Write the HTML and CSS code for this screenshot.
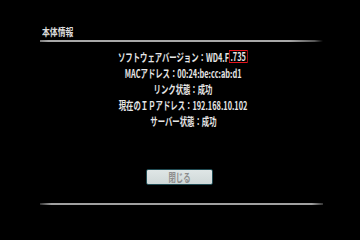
FILE: index.html
```html
<!DOCTYPE html>
<html lang="ja">
<head>
<meta charset="utf-8">
<link rel="stylesheet" href="styles.css">
</head>
<body>
<div class="screen">
  <div class="title"><span class="sq">本体情報</span></div>
  <div class="rule"></div>
  <div class="info">
    <div class="row"><span class="sq">ソフトウェアバージョン：WD4.F<span class="hl">.735</span></span></div>
    <div class="row"><span class="sq">MACアドレス：00:24:be:cc:ab:d1</span></div>
    <div class="row"><span class="sq">リンク状態：成功</span></div>
    <div class="row"><span class="sq">現在のＩＰアドレス：192.168.10.102</span></div>
    <div class="row"><span class="sq">サーバー状態：成功</span></div>
  </div>
  <div class="actions"><div class="btn"><span class="sq">閉じる</span></div></div>
  <div class="rule bottom"></div>
</div>
</body>
</html>
```
FILE: styles.css
```css
html, body {
  margin: 0;
  padding: 0;
  background: #000;
}
body {
  width: 360px;
  height: 240px;
  overflow: hidden;
  font-family: "Noto Sans CJK JP", "Noto Sans", sans-serif;
  font-weight: 700;
  color: #e6e6e6;
}
.screen {
  display: flex;
  flex-direction: column;
  padding: 26px 37px 0 40px;
}
.sq {
  display: inline-block;
  transform: scaleX(0.67);
  white-space: nowrap;
}
.title {
  height: 12px;
  font-size: 10.5px;
  line-height: 12px;
  color: #dcdcdc;
  padding-left: 2px;
}
.title .sq {
  transform-origin: left center;
  transform: scaleX(0.75);
}
.rule {
  height: 2px;
  margin-top: 2px;
  background: linear-gradient(to right, #7a7a7a 0%, #a8a8a8 3%, #a8a8a8 88%, #555 97%, #000 100%);
}
.rule.bottom {
  margin-top: 18px;
  background: linear-gradient(to right, #333 0%, #a0a0a0 4%, #a0a0a0 96%, #333 100%);
}
.info {
  margin-top: 7px;
  display: flex;
  flex-direction: column;
  align-items: center;
  padding-left: 3px;
}
.row {
  height: 16px;
  line-height: 16px;
  font-size: 11px;
  text-align: center;
}
.hl {
  display: inline-block;
  border: 1px solid #e4141c;
  padding: 0 2px 0 1px;
  height: 11px;
  line-height: 11px;
  position: relative;
  top: -1px;
}
.actions {
  margin-top: 40px;
  display: flex;
  justify-content: center;
  padding-right: 4px;
}
.btn {
  width: 65px;
  height: 14px;
  border: 1px solid #1f4a52;
  border-radius: 2px;
  background: linear-gradient(#dfe6e6, #cfd8d8);
  color: #8c8c8c;
  font-size: 11px;
  line-height: 14px;
  text-align: center;
}
```
